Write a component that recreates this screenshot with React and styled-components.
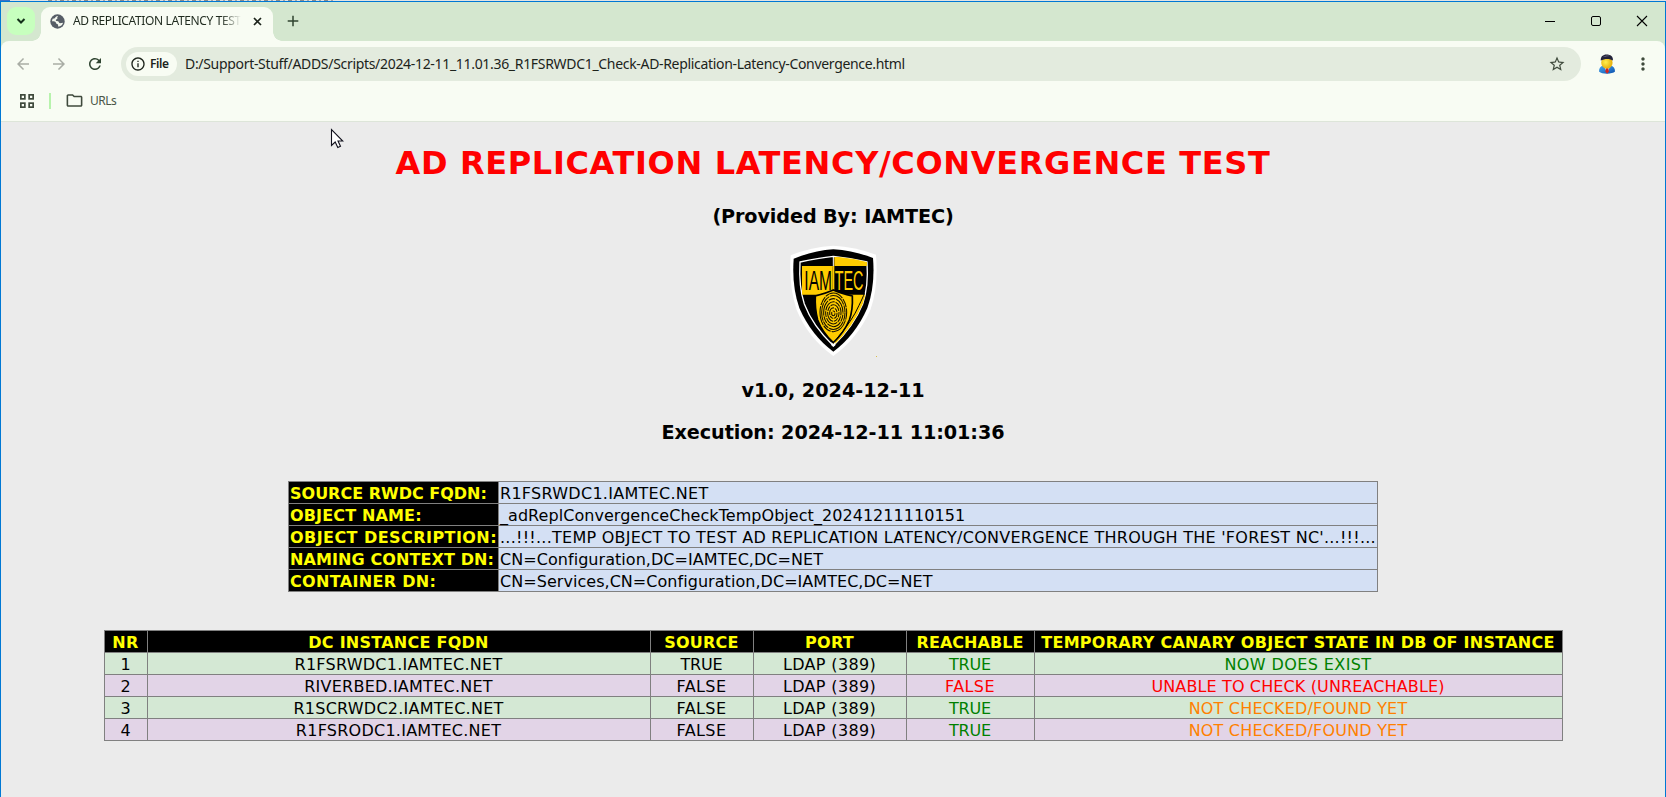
import React from "react";
import styled, { createGlobalStyle } from "styled-components";
import {
  MdArrowBack,
  MdArrowForward,
  MdRefresh,
  MdStarOutline,
  MdMoreVert,
  MdOutlineFolder,
  MdInfoOutline,
} from "react-icons/md";

const GlobalStyle = createGlobalStyle`
  * { box-sizing: border-box; }
  body { margin: 0; background: #ebebeb; overflow: hidden; }
`;

const uiFont = `"Noto Sans", "Open Sans", sans-serif`;
const pageFont = `"DejaVu Sans", Verdana, sans-serif`;

const Desktop = styled.div`
  width: 100%;
  height: 797px;
  display: flex;
  flex-direction: column;
  position: relative;
`;

const WindowBehind = styled.div`
  height: 1px;
  flex: none;
  background: linear-gradient(90deg, #3b6fc4 10px, transparent 10px),
    linear-gradient(90deg, #e3e3e3 46px, transparent 46px 335px, #e3e3e3 335px),
    repeating-linear-gradient(90deg, #8a8a8a 0 4px, #dcdcdc 4px 7px, #a5a5a5 7px 9px, #e3e3e3 9px 12px);
`;

const Browser = styled.div`
  flex: 1;
  display: flex;
  flex-direction: column;
  border: 1px solid #0078d4;
  border-bottom: 0;
  background: #d4e7cf;
`;

const TabStrip = styled.header`
  height: 39px;
  display: flex;
  align-items: flex-start;
  padding: 5px 0 0 6px;
`;

const TabSearch = styled.button`
  width: 28px;
  height: 28px;
  padding: 0;
  border: 0;
  border-radius: 9px;
  background: #c7ffbe;
  display: grid;
  place-items: center;
`;

const Tab = styled.div`
  position: relative;
  width: 232px;
  height: 34px;
  margin-left: 6px;
  padding: 0 10px 6px 9px;
  display: flex;
  align-items: center;
  border-radius: 9px 9px 0 0;
  background: #f8fcf3;

  &::before,
  &::after {
    content: "";
    position: absolute;
    bottom: 0;
    width: 9px;
    height: 9px;
  }
  &::before {
    left: -9px;
    background: radial-gradient(circle at 0 0, transparent 8.5px, #f8fcf3 9px);
  }
  &::after {
    right: -9px;
    background: radial-gradient(circle at 100% 0, transparent 8.5px, #f8fcf3 9px);
  }
`;

const TabTitle = styled.span`
  width: 170px;
  margin: 0 10px 0 8px;
  overflow: hidden;
  white-space: nowrap;
  font: 12px/18px ${uiFont};
  letter-spacing: -0.37px;
  color: #1f2a1e;
  mask-image: linear-gradient(90deg, #000 148px, transparent 168px);
`;

const NewTab = styled.div`
  margin: 8px 0 0 14px;
  display: flex;
`;

const WindowControls = styled.div`
  margin: 8px 17px 0 auto;
  display: flex;
  gap: 34px;
`;

const Toolbar = styled.div`
  height: 46px;
  padding: 0 12px 0 13px;
  display: flex;
  align-items: center;
  border-radius: 8px 8px 0 0;
  background: #f8fcf3;
  color: #3f4a3c;
`;

const NavButtons = styled.nav`
  display: flex;
  gap: 18px;
  margin-right: 17px;
`;

const NavIcon = styled.span`
  display: flex;
  color: ${(p) => (p.$disabled ? "#a9ada5" : "#2f4430")};
`;

const Omnibox = styled.div`
  flex: 1;
  height: 34px;
  margin-right: 17px;
  padding: 0 15px 0 5px;
  display: flex;
  align-items: center;
  border-radius: 17px;
  background: #e3ebde;
`;

const FileChip = styled.span`
  width: 51px;
  height: 24px;
  padding-left: 4px;
  display: flex;
  align-items: center;
  gap: 4px;
  border-radius: 12px;
  background: #f8fcf3;
  color: #1c231b;
  font: 600 12px/18px ${uiFont};
  letter-spacing: -0.4px;
`;

const Url = styled.span`
  flex: 1;
  margin-left: 8px;
  font: 14px/20px ${uiFont};
  letter-spacing: -0.315px;
  color: #1c231b;
  white-space: nowrap;
`;

const Avatar = styled.svg`
  margin-right: 17px;
`;

const BookmarkBar = styled.div`
  height: 35px;
  padding: 0 0 7px 19px;
  display: flex;
  align-items: center;
  border-bottom: 1px solid #dde5d9;
  background: #f8fcf3;
  color: #3f4a3c;
`;

const Divider = styled.span`
  width: 2px;
  height: 16px;
  margin: 0 14px 0 15px;
  background: #b7f3ac;
`;

const BookmarkName = styled.span`
  margin-left: 6px;
  font: 12px/18px ${uiFont};
  letter-spacing: -0.5px;
  color: #4a5546;
`;

const Page = styled.main`
  flex: 1;
  display: flex;
  flex-direction: column;
  align-items: center;
  padding-top: 22px;
  background: #ebebeb;
  font-family: ${pageFont};
  color: #000;
`;

const Title = styled.h1`
  margin: 0;
  font-size: 32px;
  line-height: 38px;
  letter-spacing: 0.653px;
  color: #f00;
`;

const Heading = styled.h3`
  margin: ${(p) => p.$top}px 0 0;
  font-size: 19.2px;
  line-height: 23px;
  letter-spacing: ${(p) => p.$spacing || 0}px;
`;

const Logo = styled.svg`
  display: block;
  margin-top: 16px;
`;

const DataTable = styled.table`
  width: ${(p) => p.$width}px;
  margin-top: ${(p) => p.$top}px;
  table-layout: fixed;
  border-collapse: separate;
  border-spacing: 1px;
  background: #808080;
  font-size: 16px;
  line-height: 19px;
  white-space: nowrap;
`;

const ReportTable = styled(DataTable)`
  text-align: center;
`;

const HeadCell = styled.th`
  padding: 2px 1px 0;
  background: #000;
  color: #ff0;
  font-weight: bold;
  letter-spacing: ${(p) => p.$spacing || 0}px;
  text-align: ${(p) => p.$align || "center"};
`;

const InfoCell = styled.td`
  padding: 2px 1px 0;
  background: #d4e0f4;
  letter-spacing: ${(p) => p.$spacing || 0}px;
`;

const Row = styled.tr`
  background: #d4e8d4;
  &:nth-child(even) {
    background: #e2d4e7;
  }
`;

const tones = { ok: "#008000", bad: "#ff0000", pending: "#ff8000" };

const Cell = styled.td`
  padding: 2px 1px 0;
  letter-spacing: ${(p) => p.$spacing || 0}px;
  color: ${(p) => tones[p.$tone] || "#000"};
`;

const Pointer = styled.svg`
  position: absolute;
  left: 330px;
  top: 128px;
`;

const info = [
  ["SOURCE RWDC FQDN:", 0, "R1FSRWDC1.IAMTEC.NET", 0.28],
  ["OBJECT NAME:", 0.15, "_adReplConvergenceCheckTempObject_20241211110151", 0.05],
  [
    "OBJECT DESCRIPTION:",
    0.44,
    "...!!!...TEMP OBJECT TO TEST AD REPLICATION LATENCY/CONVERGENCE THROUGH THE 'FOREST NC'...!!!...",
    0.25,
  ],
  ["NAMING CONTEXT DN:", 0.1, "CN=Configuration,DC=IAMTEC,DC=NET", 0.05],
  ["CONTAINER DN:", 0.33, "CN=Services,CN=Configuration,DC=IAMTEC,DC=NET", 0.045],
];

const columns = [
  ["NR", 42, 0.5],
  ["DC INSTANCE FQDN", 502, 0.25],
  ["SOURCE", 102, 0.2],
  ["PORT", 152, 0.3],
  ["REACHABLE", 127, 0.05],
  ["TEMPORARY CANARY OBJECT STATE IN DB OF INSTANCE", 527, 0.275],
];

const rows = [
  ["1", "R1FSRWDC1.IAMTEC.NET", "TRUE", "LDAP (389)", "TRUE", "NOW DOES EXIST", "ok", 0.4],
  ["2", "RIVERBED.IAMTEC.NET", "FALSE", "LDAP (389)", "FALSE", "UNABLE TO CHECK (UNREACHABLE)", "bad", 0.13],
  ["3", "R1SCRWDC2.IAMTEC.NET", "FALSE", "LDAP (389)", "TRUE", "NOT CHECKED/FOUND YET", "pending", 0.19],
  ["4", "R1FSRODC1.IAMTEC.NET", "FALSE", "LDAP (389)", "TRUE", "NOT CHECKED/FOUND YET", "pending", 0.19],
];

const GlobeIcon = () => (
  <svg width="15" height="15" viewBox="0 0 15 15">
    <circle cx="7.5" cy="7.5" r="7.2" fill="#565d66" />
    <path
      d="M8.2 2.1c-.9.5-1.1 1.2-.8 2 .4 1-.9 1.1-1.5 1.8-.3.6.4 1 1.1 1.1 1.5.1 1.8.7 2 1.5.3.9 1.7.7 2.6.5l1.5-.3c-.4 1.7-2 3.4-4 3.9-.7.1-1.2-.2-1-.9.2-.9-.2-1.4-1-1.7-1-.3-1.1-1.2-1.4-1.8-.5-.8-2-1.2-3.7-1 0-1 .4-1.9.9-2.6 1.3.3 2-.1 2.4-1 .4-1 1.7-1.6 2.9-1.5z"
      fill="#f3f7ee"
    />
  </svg>
);

const AppsIcon = () => (
  <svg width="14" height="14" viewBox="0 0 14 14" fill="none" stroke="#3f4a3c" strokeWidth="1.7">
    <rect x=".85" y=".85" width="4" height="4" />
    <rect x="9.15" y=".85" width="4" height="4" />
    <rect x=".85" y="9.15" width="4" height="4" />
    <rect x="9.15" y="9.15" width="4" height="4" />
  </svg>
);

const UserAvatar = () => (
  <Avatar width="18" height="20" viewBox="0 0 18 20">
    <defs>
      <linearGradient id="suit" x1="0" x2="1" y1="0" y2="1">
        <stop offset="0" stopColor="#49a7ee" />
        <stop offset="1" stopColor="#0b50ad" />
      </linearGradient>
      <radialGradient id="face" cx=".4" cy=".45">
        <stop offset="0" stopColor="#fff04e" />
        <stop offset="1" stopColor="#e9b512" />
      </radialGradient>
    </defs>
    <path d="M1 17.500c0-3.500 1.500-5.200 4-5.700h7.500c3 .5 4.500 2.200 4.500 5.700-2.500 2.800-13 3-16 0z" fill="url(#suit)" />
    <path d="M6 12.500h6l-2.800 6.500z" fill="#e8f2ff" />
    <path d="M8 13.500h2.200l.6 4-1.700 2.200-1.700-2.200z" fill="#d6231d" />
    <ellipse cx="8.900" cy="8.800" rx="5.700" ry="6" fill="url(#face)" />
    <path d="M2.800 6.500C2.500 2.500 5 .6 8.500.5c4 0 7 2 6.400 6-3-2.200-8.500-2-12.100 0z" fill="#23233a" />
    <path d="M4.500 3.300c2-1.800 5-2 7.500-1.300-2.500 0-5 .5-7.500 1.300z" fill="#9b9bb8" />
  </Avatar>
);

const ridges = [5, 11, 17, 23, 29, 35, 40];

const CompanyLogo = () => (
  <Logo width="96" height="114" viewBox="45 42 288 342">
    <defs>
      <clipPath id="inner">
        <path d="M90 96Q145 84 190 79Q240 84 291 96Q296 170 278 222Q250 290 190 347Q128 288 103 222Q86 170 90 96Z" />
      </clipPath>
    </defs>
    <path d="M62 76Q125 50 190 47Q255 50 318 74Q326 170 301 240Q262 326 190 378Q116 326 80 240Q56 170 62 76Z" fill="#fff" />
    <path d="M71 86Q130 62 190 58Q252 62 309 84Q316 168 292 234Q256 316 190 365Q124 316 88 234Q65 168 71 86Z" fill="#000" />
    <path d="M90 96Q145 84 190 79Q240 84 291 96Q296 170 278 222Q250 290 190 347Q128 288 103 222Q86 170 90 96Z" fill="#000" stroke="#fff" strokeWidth="4" />
    <g clipPath="url(#inner)">
      <path d="M193 80H300V108H193ZM96 108H187V194H96ZM190 194H300V360H190Z" fill="#fc0" />
      <path d="M190 80V110" stroke="#fff" strokeWidth="3" />
      <path d="M187 108H193V190H187Z" fill="#fc0" />
      <path d="M136 198Q168 190 190 180Q213 190 247 198Q249 240 238 270Q222 308 190 338Q156 306 143 270Q134 235 136 198Z" fill="#fc0" stroke="#000" strokeWidth="5" />
      <path d="M283 190Q280 200 267 226Q247 272 201 325" fill="none" stroke="#000" strokeWidth="3" />
    </g>
    <g fill="none" stroke="#151000" strokeWidth="3.2">
      {ridges.map((r, i) => (
        <ellipse
          key={r}
          cx="190"
          cy={250 - i * 0.5}
          rx={r}
          ry={r * 1.45}
          strokeDasharray={`${18 + r} 3 ${9 + i * 3} 2.5`}
          strokeDashoffset={i * 11}
        />
      ))}
    </g>
    <path d="M184 336l6 6 6-6v10l-6 5-6-5z" fill="#fff" />
    <text x="103" y="181" fontFamily="Liberation Sans, Arial, sans-serif" fontSize="81" textLength="83" lengthAdjust="spacingAndGlyphs" fill="#000">
      IAM
    </text>
    <text x="194" y="181" fontFamily="Liberation Sans, Arial, sans-serif" fontSize="81" textLength="86" lengthAdjust="spacingAndGlyphs" fill="#fc0">
      TEC
    </text>
    <rect x="318" y="378" width="3" height="3" fill="#d8bd4a" />
  </Logo>
);

export default function App() {
  return (
    <Desktop>
      <GlobalStyle />
      <WindowBehind />
      <Browser>
        <TabStrip>
          <TabSearch aria-label="Search tabs">
            <svg width="10" height="6" viewBox="0 0 10 6" fill="none" stroke="#14301a" strokeWidth="2">
              <path d="M1.500 1L5 4.500 8.500 1" />
            </svg>
          </TabSearch>
          <Tab>
            <GlobeIcon />
            <TabTitle>AD REPLICATION LATENCY TEST</TabTitle>
            <svg width="9" height="9" viewBox="0 0 9 9" stroke="#1c231b" strokeWidth="1.700">
              <path d="M1 1l7 7M8 1l-7 7" />
            </svg>
          </Tab>
          <NewTab>
            <svg width="12" height="12" viewBox="0 0 12 12" stroke="#2f4430" strokeWidth="1.500">
              <path d="M6 .7v10.600M.7 6h10.600" />
            </svg>
          </NewTab>
          <WindowControls>
            <svg width="12" height="12" viewBox="0 0 12 12" stroke="#000">
              <path d="M1 6.500h10" />
            </svg>
            <svg width="12" height="12" viewBox="0 0 12 12" stroke="#000" fill="none">
              <rect x="1.500" y="1.500" width="9" height="9" rx="1.500" />
            </svg>
            <svg width="12" height="12" viewBox="0 0 12 12" stroke="#000" strokeWidth="1.100">
              <path d="M1 1l10 10M11 1l-10 10" />
            </svg>
          </WindowControls>
        </TabStrip>
        <Toolbar>
          <NavButtons>
            <NavIcon $disabled><MdArrowBack size={18} /></NavIcon>
            <NavIcon $disabled><MdArrowForward size={18} /></NavIcon>
            <NavIcon><MdRefresh size={18} /></NavIcon>
          </NavButtons>
          <Omnibox>
            <FileChip>
              <MdInfoOutline size={16} />
              File
            </FileChip>
            <Url>
              D:/Support-Stuff/ADDS/Scripts/2024-12-11_11.01.36_R1FSRWDC1_Check-AD-Replication-Latency-Convergence.html
            </Url>
            <MdStarOutline size={18} />
          </Omnibox>
          <UserAvatar />
          <MdMoreVert size={20} />
        </Toolbar>
        <BookmarkBar>
          <AppsIcon />
          <Divider />
          <MdOutlineFolder size={19} />
          <BookmarkName>URLs</BookmarkName>
        </BookmarkBar>
        <Page>
          <Title>AD REPLICATION LATENCY/CONVERGENCE TEST</Title>
          <Heading $top={23} $spacing={-0.1}>(Provided By: IAMTEC)</Heading>
          <CompanyLogo />
          <Heading $top={21}>v1.0, 2024-12-11</Heading>
          <Heading $top={19} $spacing={-0.08}>Execution: 2024-12-11 11:01:36</Heading>
          <DataTable $width={1090} $top={37}>
            <colgroup>
              <col width="209" />
              <col width="878" />
            </colgroup>
            <tbody>
              {info.map(([label, labelSpacing, value, spacing]) => (
                <tr key={label}>
                  <HeadCell $align="left" $spacing={labelSpacing}>{label}</HeadCell>
                  <InfoCell $spacing={spacing}>{value}</InfoCell>
                </tr>
              ))}
            </tbody>
          </DataTable>
          <ReportTable $width={1459} $top={38}>
            <colgroup>
              {columns.map(([name, width]) => (
                <col key={name} width={width} />
              ))}
            </colgroup>
            <thead>
              <tr>
                {columns.map(([name, , spacing]) => (
                  <HeadCell key={name} $spacing={spacing}>{name}</HeadCell>
                ))}
              </tr>
            </thead>
            <tbody>
              {rows.map(([nr, fqdn, source, port, reachable, state, tone, spacing]) => (
                <Row key={nr}>
                  <Cell>{nr}</Cell>
                  <Cell $spacing={0.25}>{fqdn}</Cell>
                  <Cell $spacing={source === "TRUE" ? -0.2 : 0.43}>{source}</Cell>
                  <Cell $spacing={0.35}>{port}</Cell>
                  <Cell $spacing={reachable === "TRUE" ? -0.2 : 0.43} $tone={reachable === "TRUE" ? "ok" : "bad"}>
                    {reachable}
                  </Cell>
                  <Cell $spacing={spacing} $tone={tone}>{state}</Cell>
                </Row>
              ))}
            </tbody>
          </ReportTable>
        </Page>
      </Browser>
      <Pointer width="14" height="22" viewBox="0 0 14 22">
        <path
          d="M1.500 1.500V17.500L5.200 14l2.600 5.500 2.700-1.200L8 13h4.800z"
          fill="#fff"
          stroke="#10101c"
          strokeWidth="1.100"
        />
      </Pointer>
    </Desktop>
  );
}
